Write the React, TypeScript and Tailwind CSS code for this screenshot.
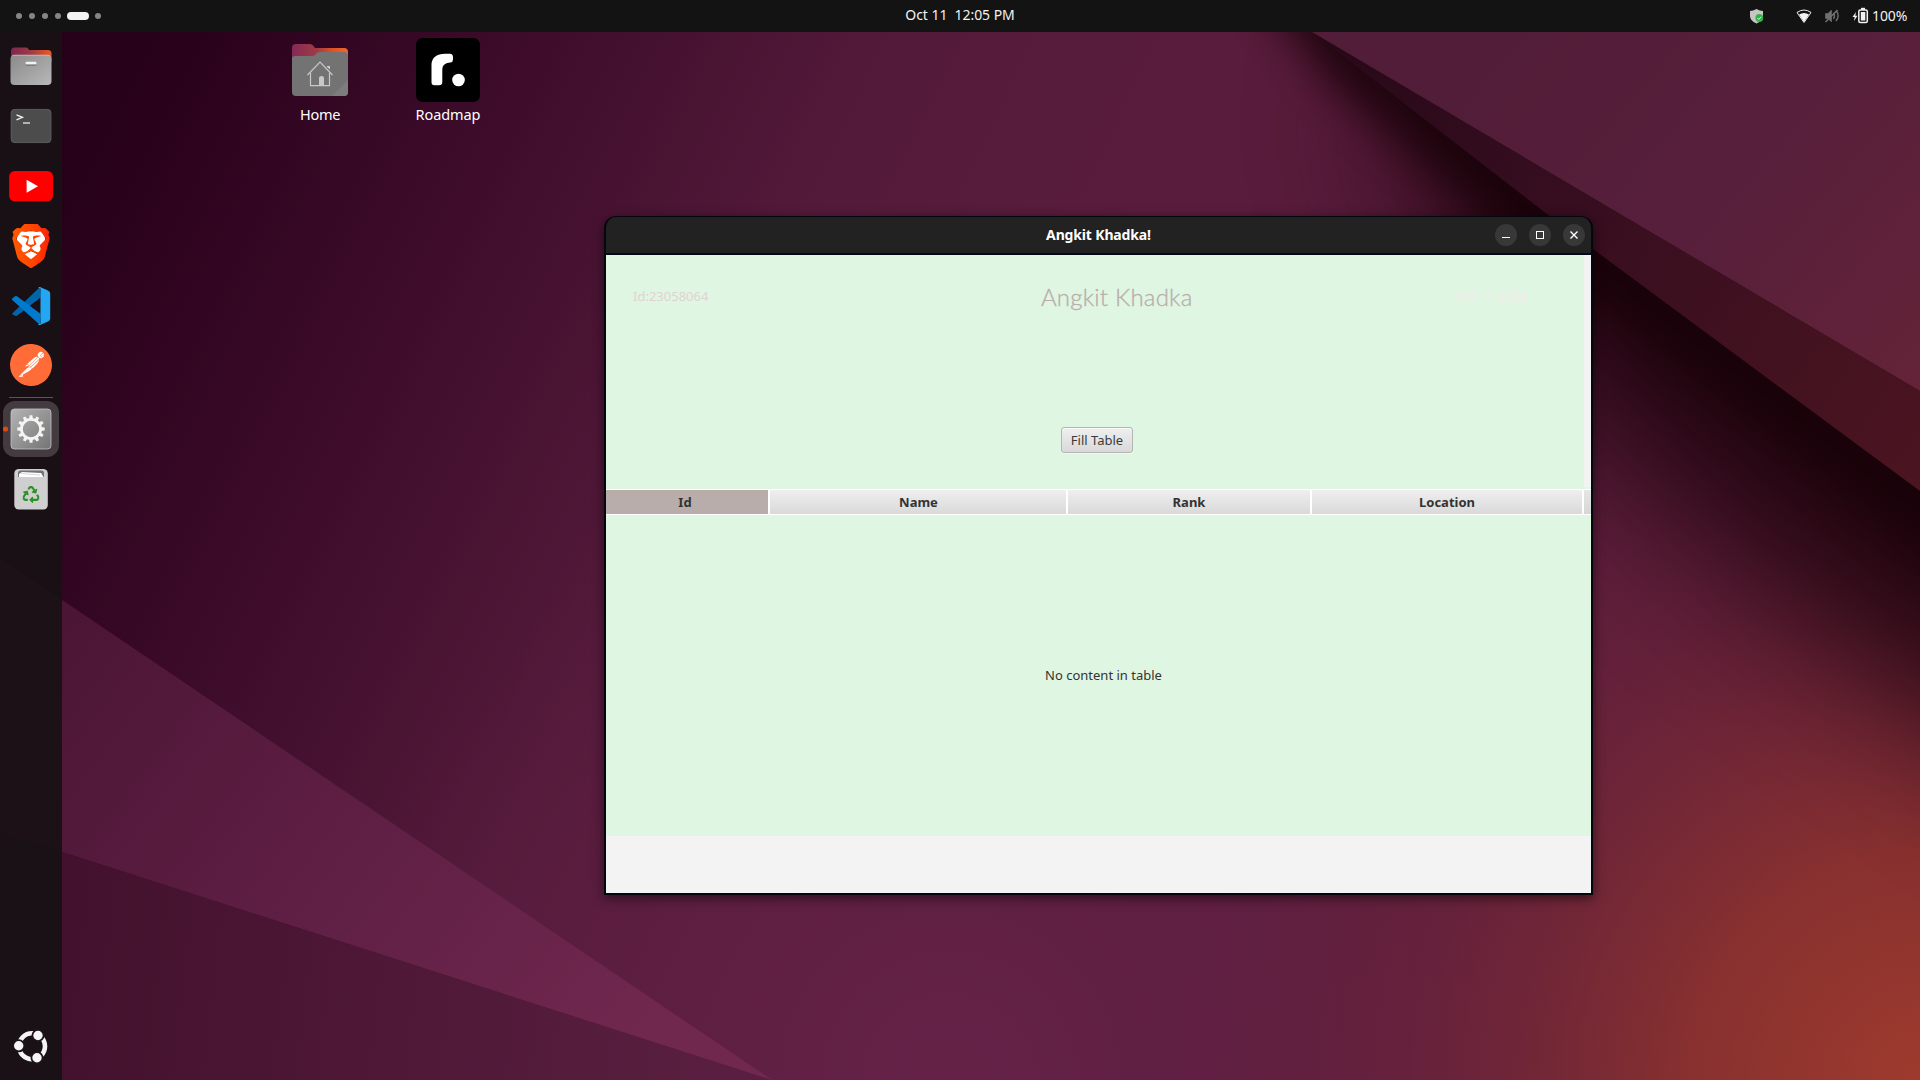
import React from "react";
import { SiBrave, SiPostman } from "react-icons/si";
import { FaRecycle } from "react-icons/fa";

function Wallpaper() {
  return (
    <svg className="absolute inset-0 h-full w-full" viewBox="0 0 1920 1080" preserveAspectRatio="none">
      <defs>
        <linearGradient id="base" gradientUnits="userSpaceOnUse" x1="120" y1="100" x2="980" y2="520">
          <stop offset="0" stopColor="#270019" />
          <stop offset="0.3" stopColor="#3a0a28" />
          <stop offset="0.7" stopColor="#541a3a" />
          <stop offset="1" stopColor="#591c3c" />
        </linearGradient>
        <radialGradient id="violet" gradientUnits="userSpaceOnUse" cx="950" cy="1080" r="620">
          <stop offset="0" stopColor="#652348" stopOpacity="0.9" />
          <stop offset="1" stopColor="#642148" stopOpacity="0" />
        </radialGradient>
        <radialGradient id="ember" gradientUnits="userSpaceOnUse" cx="1930" cy="1090" r="800">
          <stop offset="0" stopColor="#a03b2d" />
          <stop offset="0.3" stopColor="#8d332e" stopOpacity="0.9" />
          <stop offset="0.65" stopColor="#732738" stopOpacity="0.45" />
          <stop offset="1" stopColor="#682346" stopOpacity="0" />
        </radialGradient>
        <linearGradient id="top" gradientUnits="userSpaceOnUse" x1="1500" y1="32" x2="1920" y2="390">
          <stop offset="0" stopColor="#521d38" />
          <stop offset="0.5" stopColor="#571f3b" />
          <stop offset="1" stopColor="#642338" />
        </linearGradient>
        <linearGradient id="band" gradientUnits="userSpaceOnUse" x1="1300" y1="40" x2="1920" y2="440">
          <stop offset="0" stopColor="#260817" />
          <stop offset="0.35" stopColor="#340d1f" />
          <stop offset="1" stopColor="#4a1420" />
        </linearGradient>
        <linearGradient id="tip" gradientUnits="userSpaceOnUse" x1="60" y1="620" x2="640" y2="1060">
          <stop offset="0" stopColor="#4b1535" />
          <stop offset="0.5" stopColor="#5f1f44" />
          <stop offset="1" stopColor="#71284f" />
        </linearGradient>
        <linearGradient id="floor" gradientUnits="userSpaceOnUse" x1="60" y1="1000" x2="720" y2="1080">
          <stop offset="0" stopColor="#43112d" />
          <stop offset="1" stopColor="#5a1f40" />
        </linearGradient>
        <filter id="soft" filterUnits="userSpaceOnUse" x="900" y="-300" width="1400" height="1500" colorInterpolationFilters="sRGB">
          <feGaussianBlur stdDeviation="22" />
        </filter>
        <filter id="softer" filterUnits="userSpaceOnUse" x="900" y="-300" width="1400" height="1700" colorInterpolationFilters="sRGB">
          <feGaussianBlur stdDeviation="75" />
        </filter>
      </defs>
      <rect width="1920" height="1080" fill="url(#base)" />
      <rect width="1920" height="1080" fill="url(#violet)" />
      <rect width="1920" height="1080" fill="url(#ember)" />
      <path d="M1370 100 L1560 400 L1760 580 L2100 820 L2100 400 L1600 60Z" fill="#1c030b" opacity="0.9" filter="url(#softer)" />
      <path d="M1240 -40 L1330 82 L1540 262 L1760 425 L2040 640 L2040 400 L1400 -60Z" fill="#190209" opacity="0.9" filter="url(#soft)" />
      <path d="M1312 32 L1543 211 L1593 249 L1920 491 V391Z" fill="url(#band)" />
      <path d="M1312 32 L1920 391 V32Z" fill="url(#top)" />
      <path d="M0 558 L772 1080 L0 832Z" fill="url(#tip)" />
      <path d="M0 832 L772 1080 H0Z" fill="url(#floor)" />
    </svg>
  );
}

function StatusIcons() {
  return (
    <svg className="h-8 w-[124px]" viewBox="1748 0 124 32">
      <path d="M1756.500 9 Q1760 11 1763 11 V16 Q1763 21 1756.500 23.500 Q1750 21 1750 16 V11 Q1753 11 1756.500 9Z" fill="#c6c6c6" />
      <circle cx="1759.300" cy="18" r="3.900" fill="#34b24a" />
      <path d="M1757.500 18 l1.300 1.400 l2.400 -2.600" stroke="#e8ffe8" fill="none" />
      <path d="M1797 12.500 Q1804 7.500 1811 12.500 L1804 22.500Z" fill="none" stroke="#f0f0f0" strokeWidth="1" />
      <path d="M1799 14.500 Q1804 11.500 1809 14.500 L1804 22Z" fill="#f4f4f4" />
      <g stroke="#707070" fill="none" strokeWidth="1.400">
        <path d="M1825.500 13.500 h2.500 l3.500 -3.500 v12 l-3.500 -3.500 h-2.500z" fill="#707070" strokeWidth="0.600" />
        <path d="M1833.500 13 q2 3 0 6" />
        <path d="M1836.500 11 q3.500 5 -0.500 10" />
        <path d="M1825.500 22 l12 -12" strokeWidth="1.600" />
      </g>
      <path d="M1856 12 l-3.500 5 h2.200 l-0.700 4 l3.500 -5.200 h-2.200z" fill="#f2f2f2" />
      <rect x="1858.800" y="10" width="8.500" height="12.500" rx="1.500" fill="none" stroke="#f2f2f2" strokeWidth="1.500" />
      <rect x="1861" y="7.800" width="4" height="2" fill="#f2f2f2" />
      <rect x="1860.800" y="12" width="4.500" height="8.500" fill="#f2f2f2" />
    </svg>
  );
}

function TopBar() {
  return (
    <header className="relative grid h-8 shrink-0 grid-cols-3 items-center bg-[#131313] text-[14px] text-[#f2f2f2]">
      <div className="flex items-center pl-4">
        <div className="flex gap-[7px]">
          {[0, 1, 2, 3].map((n) => (
            <span key={n} className="size-1.5 rounded-full bg-[#868686]" />
          ))}
        </div>
        <span className="ml-[6px] h-2 w-[22px] rounded-full bg-[#f2f2f2]" />
        <span className="ml-[6px] size-1.5 rounded-full bg-[#868686]" />
      </div>
      <div className="-mt-1 text-center whitespace-pre tracking-[-0.05px]">{"Oct 11  12:05 PM"}</div>
      <div className="flex items-center justify-end pr-[11px]">
        <StatusIcons />
        <span className="-mt-px w-[37px] tracking-[-0.1px]">100%</span>
      </div>
    </header>
  );
}

function DockCell({ y, children }: { y: number; children: React.ReactNode }) {
  return (
    <svg className="h-[60px] w-[62px] shrink-0" viewBox={`0 ${y} 62 60`}>
      {children}
    </svg>
  );
}

const teeth = Array.from({ length: 12 }, (_, n) => n * 30);

function Dock() {
  return (
    <nav className="flex w-[62px] shrink-0 flex-col bg-[#171115]/92 pt-1">
      <DockCell y={36}>
        <defs>
          <linearGradient id="tab" x1="0" x2="1">
            <stop offset="0" stopColor="#7d2752" />
            <stop offset="0.5" stopColor="#a03a44" />
            <stop offset="1" stopColor="#ee5a25" />
          </linearGradient>
          <linearGradient id="steel" x1="0" y1="0" x2="1" y2="1">
            <stop offset="0" stopColor="#8a8a8a" />
            <stop offset="1" stopColor="#b8b8b8" />
          </linearGradient>
        </defs>
        <path d="M11 60 V51 q0 -3.500 3.500 -3.500 h12 q1.500 0 2.500 2.500 h19 q3.500 0 3.500 3.500 V62z" fill="url(#tab)" />
        <rect x="10.500" y="55" width="41" height="30" rx="4" fill="url(#steel)" />
        <path d="M12 56 q1 -0.800 3 -0.800 h32 q2 0 3 0.800" stroke="#c4c4c4" fill="none" strokeWidth="0.800" />
        <rect x="25.500" y="62" width="11" height="3.500" rx="1.500" fill="#5d5d5d" />
        <rect x="25.500" y="61.800" width="11" height="2.800" rx="1.200" fill="#f2f2f2" />
      </DockCell>
      <DockCell y={96}>
        <rect x="10.800" y="109" width="40.500" height="34" rx="4" fill="#4c4c4c" />
        <rect x="11.200" y="109.400" width="39.700" height="33.200" rx="3.700" fill="none" stroke="#606060" strokeWidth="0.700" />
        <path d="M16.500 114.800 l6 2.500 l-6 2.500" fill="none" stroke="#f0f0f0" strokeWidth="1.300" />
        <path d="M23 123 h7" stroke="#e8e8e8" strokeWidth="1.300" />
      </DockCell>
      <DockCell y={156}>
        <rect x="9.200" y="171" width="43.800" height="30.300" rx="5.500" fill="#ff0000" />
        <path d="M26.600 179.700 L38 186.200 L26.600 192.700Z" fill="#fff" />
      </DockCell>
      <div className="grid h-[60px] w-[62px] shrink-0 place-items-center">
        <svg width="44" height="44" viewBox="0 0 24 24" preserveAspectRatio="none">
          <defs>
            <linearGradient id="brave" x1="0" x2="1">
              <stop offset="0.1" stopColor="#ff5601" />
              <stop offset="0.55" stopColor="#ff4500" />
              <stop offset="1" stopColor="#ff2200" />
            </linearGradient>
          </defs>
          <path d="M5 4 H19 L20 10 L16 20 L12 22 L8 20 L4 10Z" fill="#fff" />
          <SiBrave x="0" y="0" width="24" height="24" size={24} fill="url(#brave)" />
        </svg>
      </div>
      <DockCell y={276}>
        <path d="M12.200 313.500 L40 287 L40.500 297.500 L17 315.800 q-1 0.600 -2 0 l-2.700 -1.500z" fill="#0065a9" />
        <path d="M12.200 298.500 L15 296.200 q1 -0.600 2 0 L40.500 313.800 L40 325 L12.200 300 q-0.700 -0.800 0 -1.500z" fill="#007acc" />
        <path d="M40 287 L48 290.600 q2.200 1 2.200 3 V318.500 q0 2 -2.200 3 L40 325 q-1.500 0.300 -2 -0.600 l2.500 -1 V288.500 l-2.500 -1 q1 -0.900 2 -0.500z" fill="#24a7f2" />
      </DockCell>
      <div className="flex h-[60px] w-[62px] shrink-0 justify-center pt-2">
        <div className="flex size-[42px] items-center justify-center rounded-full bg-[radial-gradient(circle,white_60%,transparent_61%)]">
          <SiPostman className="size-[42px] shrink-0" color="#ff6c37" />
        </div>
      </div>
      <div className="mx-auto h-px w-11 shrink-0 translate-y-px bg-[#5a5358]" />
      <DockCell y={397}>
        <defs>
          <linearGradient id="plate" x1="0" y1="0" x2="1" y2="1">
            <stop offset="0" stopColor="#b4b4b4" />
            <stop offset="1" stopColor="#747474" />
          </linearGradient>
        </defs>
        <rect x="3" y="401" width="56" height="56" rx="12" fill="#443b40" />
        <circle cx="5.500" cy="429" r="2.600" fill="#dd4a14" />
        <rect x="11" y="409" width="40" height="40" rx="3.500" fill="url(#plate)" stroke="#c4c4c4" strokeWidth="0.800" />
        <g fill="#f5f4f2">
          {teeth.map((a) => (
            <path key={a} d="M29 420 L29.600 415.300 h2.800 L33 420Z" transform={`rotate(${a} 31 429)`} />
          ))}
        </g>
        <circle cx="31" cy="429" r="9.600" fill="none" stroke="#f5f4f2" strokeWidth="2.800" />
      </DockCell>
      <DockCell y={457}>
        <rect x="14.300" y="469" width="33.500" height="40.500" rx="4.500" fill="#cfcfcf" />
        <path d="M18 477 V473 q0 -2.500 2.500 -2.500 h21 q2.500 0 2.500 2.500 V477z" fill="#737373" />
        <path d="M19 477 V474 l3 -2 l19 1 l2.500 4z" fill="#fff" />
        <path d="M21 473.500 l19 1.500" stroke="#bcbcbc" strokeWidth="0.600" />
        <FaRecycle x="22.500" y="486" width="17" height="17" size={17} color="#2c9128" />
      </DockCell>
      <div className="flex-1" />
      <svg className="h-[68px] w-[62px] shrink-0" viewBox="0 1012 62 68">
        <circle cx="32" cy="1046.300" r="13" fill="none" stroke="#f4f4f4" strokeWidth="4.600" />
        <g fill="#f6f6f6" stroke="#1f131a" strokeWidth="1.800">
          <circle cx="18.700" cy="1045.800" r="5.600" />
          <circle cx="38" cy="1035.500" r="5.600" />
          <circle cx="37" cy="1057.800" r="5.600" />
        </g>
      </svg>
    </nav>
  );
}

function DesktopIcons() {
  return (
    <div className="flex pl-[207px] pt-1.5 text-[14.500px] leading-5 text-white">
      <div className="flex w-[102px] flex-col items-center">
        <svg className="h-[66px] w-16" viewBox="288 38 64 66">
          <defs>
            <linearGradient id="flap" x1="0" x2="1">
              <stop offset="0" stopColor="#842a55" />
              <stop offset="0.45" stopColor="#a03b45" />
              <stop offset="0.7" stopColor="#dc4f27" />
              <stop offset="1" stopColor="#f3662b" />
            </linearGradient>
          </defs>
          <path d="M292 64 V48 q0 -4 4 -4 h14 q2 0 3.500 2 l1.500 2 h29 q4 0 4 4 V64z" fill="url(#flap)" />
          <path d="M292 58.500 q0 -2.500 3 -2.500 h17 q2 0 3.500 -1.500 l1.500 -1.500 q1.200 -1 3 -1 h24 q4 0 4 4 V92 q0 4 -4 4 h-48 q-4 0 -4 -4z" fill="#737373" />
          <path d="M332 96 L348 80 V92 q0 4 -4 4z" fill="#7d7d7d" />
          <g fill="none" stroke="#c8c8c8" strokeWidth="1.200">
            <path d="M307.500 75 L320 62.200 L332.500 75" />
            <path d="M310.500 72.500 V85.700 H329.500 V72.500" />
          </g>
          <path d="M319 85.500 V78 q0 -2 2.500 -2 t2.500 2 V85.500z M327 67 v-1 h3 v3.500z" fill="#c8c8c8" />
        </svg>
        <span className="tracking-[-0.3px]">Home</span>
      </div>
      <div className="ml-6 flex w-[106px] flex-col items-center">
        <svg className="h-[66px] w-16" viewBox="0 0 64 66">
          <rect width="64" height="64" rx="6.500" fill="#000" />
          <path d="M15.500 26 Q16.500 16 29 15.800 L34 15.800 Q37 16 37 19 V21.500 Q37 24 34.500 24.500 Q26.500 25 26.300 31 V44 Q26.300 47.300 23 47.300 H18.500 Q15.500 47.300 15.500 44Z" fill="#fff" />
          <circle cx="42.500" cy="42" r="6.300" fill="#fff" />
        </svg>
        <span className="tracking-[-0.1px]">Roadmap</span>
      </div>
    </div>
  );
}

const columns = [
  { label: "Id", cls: "w-[162px] bg-[#b9adac] pr-1" },
  { label: "Name", cls: "w-[296px] bg-linear-to-b from-[#efefef] to-[#d9d9d9] pl-px" },
  { label: "Rank", cls: "w-[242px] bg-linear-to-b from-[#efefef] to-[#d9d9d9]" },
  { label: "Location", cls: "w-[270px] bg-linear-to-b from-[#efefef] to-[#d9d9d9]" },
];

function AppWindow() {
  return (
    <section className="absolute left-[604px] top-[216px] flex h-[679px] w-[989px] flex-col overflow-hidden rounded-t-[12px] border-x-2 border-b-2 border-t border-[#06060f] bg-[#222222] shadow-[0_3px_12px_rgba(0,0,0,0.55)]">
      <div className="grid h-9 shrink-0 grid-cols-[1fr_auto_1fr] items-center">
        <span />
        <h1 className="pb-0.5 text-[14px] font-bold text-white tracking-[-0.15px]">Angkit Khadka!</h1>
        <div className="flex justify-end gap-3 pr-1.5">
          <span className="grid size-[22px] place-items-center rounded-full bg-[#383838]">
            <svg width="10" height="10" viewBox="0 0 10 10"><path d="M1 7.500 H9" stroke="#fff" /></svg>
          </span>
          <span className="grid size-[22px] place-items-center rounded-full bg-[#383838]">
            <svg width="10" height="10" viewBox="0 0 10 10"><rect x="1.500" y="1.500" width="7" height="7" fill="none" stroke="#fff" /></svg>
          </span>
          <span className="grid size-[22px] place-items-center rounded-full bg-[#383838]">
            <svg width="10" height="10" viewBox="0 0 10 10"><path d="M1.500 1.500 L8.500 8.500 M8.500 1.500 L1.500 8.500" stroke="#fff" strokeWidth="1.400" /></svg>
          </span>
        </div>
      </div>
      <div className="h-0.5 shrink-0 bg-[#040b18]" />
      <div className="flex flex-1 flex-col bg-[#f3f3f3] text-[13px] text-[#333333]">
        <div className="flex h-[232px]">
          <div className="flex w-[978px] flex-col items-center bg-[#dff6e2]">
            <div className="grid h-[84px] w-full grid-cols-[435px_415px_1fr] items-center">
              <span className="pl-[27px] text-[#e1d3d1]">Id:23058064</span>
              <span className="whitespace-nowrap font-['Lato'] text-[24px] font-light tracking-[0.2px] text-[#b9adac] [-webkit-text-stroke:0.3px_#b9adac]">Angkit Khadka</span>
              <span className="-ml-px text-[#f5eaea]">Oct 11 2024</span>
            </div>
            <button className="mt-[88px] ml-1 h-[26px] w-[72px] rounded-[3px] border border-[#b5b5b5] bg-linear-to-b from-[#efefef] to-[#d9d9d9] pt-px text-[#3a3a3a] shadow-[0_1px_0_#f0faf1,inset_0_1px_0_#fafafa]">
              Fill Table
            </button>
          </div>
        </div>
        <div className="h-0.5 bg-[#dff6e2]" />
        <div className="flex h-[26px] gap-0.5 border-y border-white bg-white leading-4">
          {columns.map((c) => (
            <div key={c.label} className={`flex shrink-0 items-end justify-center pb-1 font-bold ${c.cls}`}>
              {c.label}
            </div>
          ))}
          <div className="flex-1 bg-linear-to-b from-[#e6e6e6] to-[#d6d6d6]" />
        </div>
        <div className="grid h-[321px] place-items-center bg-[#dff6e2] pl-2.5">No content in table</div>
      </div>
    </section>
  );
}

export default function App() {
  return (
    <div className="relative flex h-[1080px] w-[1920px] flex-col overflow-hidden bg-[#270019] font-['Noto_Sans','Open_Sans',sans-serif]">
      <Wallpaper />
      <TopBar />
      <div className="relative flex flex-1">
        <Dock />
        <DesktopIcons />
      </div>
      <AppWindow />
    </div>
  );
}
